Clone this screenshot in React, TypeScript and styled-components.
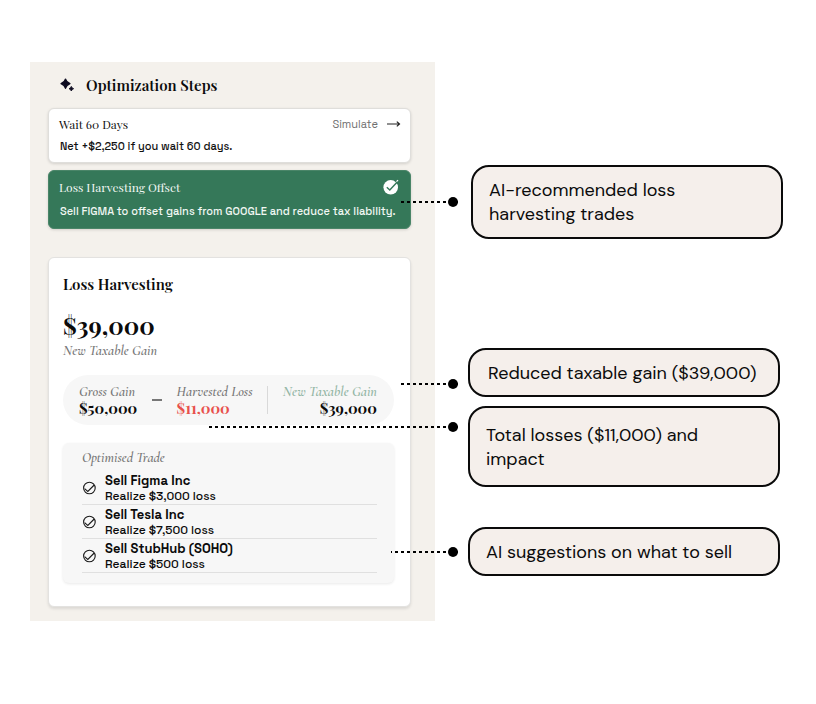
import React from "react";
import styled, { createGlobalStyle } from "styled-components";

const serif = '"Playfair Display", "Liberation Serif", serif';
const italicSerif = '"Cormorant Garamond", Cormorant, "Liberation Serif", serif';
const sans = '"Space Grotesk", Inter, sans-serif';

const GlobalStyle = createGlobalStyle`
  *, *::before, *::after { box-sizing: border-box; }
  body { margin: 0; background: #fff; color: #0b0b0b; }
  h1, h2, h3, p, ul, dl, dd { margin: 0; padding: 0; }
`;

const Page = styled.div`
  display: grid;
  grid-template-columns: 405fr 315fr;
  gap: 33px;
  align-items: start;
  padding: 62px 33px 62px 30px;
  font-family: ${sans};
`;

const Panel = styled.main`
  padding: 12px 24px 14px 18px;
  background: #f4f1ec;
`;

const PanelHeader = styled.header`
  display: flex;
  align-items: center;
  gap: 11px;
  height: 22px;
  margin-bottom: 12px;
  padding-left: 11px;
`;

const PanelTitle = styled.h1`
  font: 600 15px/22px ${serif};
  white-space: nowrap;
`;

const StepCard = styled.section<{ $active?: boolean }>`
  margin-bottom: 7px;
  padding: ${(p) => (p.$active ? "6px 11px 7px 10px" : "5px 9px 6px 10px")};
  border: 1px solid ${(p) => (p.$active ? "#4a8568" : "#dfdedb")};
  border-radius: 6px;
  background: ${(p) => (p.$active ? "#357859" : "#fff")};
  color: ${(p) => (p.$active ? "#f1f7f3" : "#111")};
  box-shadow: 0 1px 3px rgba(0, 0, 0, 0.14);
`;

const StepTop = styled.div`
  display: flex;
  align-items: center;
  justify-content: space-between;
  height: 20px;
`;

const StepTitle = styled.h2`
  font: 400 12px/20px ${serif};
  white-space: nowrap;
`;

const StepText = styled.p<{ $offset?: boolean }>`
  margin-top: ${(p) => (p.$offset ? "4px" : "2px")};
  padding-left: 1px;
  font-size: 11px;
  font-weight: 500;
  line-height: 20px;
  white-space: nowrap;
`;

const SimulateButton = styled.button`
  display: flex;
  align-items: center;
  gap: 8px;
  padding: 0;
  border: 0;
  background: none;
  color: #6f6f6f;
  font: 400 11px/16px ${sans};
  cursor: pointer;
`;

const HarvestCard = styled.section`
  margin-top: 28px;
  padding: 14px 16px 23px 14px;
  border: 1px solid #e3e2e0;
  border-radius: 6px;
  background: #fff;
  box-shadow: 0 2px 3px rgba(0, 0, 0, 0.1);
`;

const HarvestTitle = styled.h2`
  font: 600 15px/24px ${serif};
`;

const Total = styled.p`
  margin-top: 12px;
  font: 700 24px/34px ${serif};
`;

const Caption = styled.p`
  font: italic 600 14px/18px ${italicSerif};
  color: #777;
`;

const Summary = styled.dl`
  display: flex;
  align-items: center;
  justify-content: space-between;
  height: 50px;
  margin-top: 15px;
  padding: 0 17px 0 16px;
  border-radius: 25px;
  background: #f7f7f7;
`;

const Figure = styled.div<{ $end?: boolean }>`
  text-align: ${(p) => (p.$end ? "right" : "left")};
  white-space: nowrap;
`;

const FigureLabel = styled.dt<{ $color?: string }>`
  font: italic 600 14px/17px ${italicSerif};
  color: ${(p) => p.$color ?? "#777"};
`;

const FigureValue = styled.dd<{ $color?: string }>`
  font: 700 15px/17px ${serif};
  color: ${(p) => p.$color ?? "#0b0b0b"};
`;

const Minus = styled.span`
  width: 10px;
  height: 2px;
  background: #777;
`;

const Divider = styled.span`
  width: 1px;
  height: 28px;
  background: #d9d9d9;
`;

const Trades = styled.section`
  margin-top: 18px;
  padding: 6px 17px 10px 19px;
  border-radius: 6px;
  background: #f7f7f7;
  box-shadow: 0 1px 3px rgba(0, 0, 0, 0.09);
`;

const TradesTitle = styled.h3`
  margin-bottom: 4px;
  font: italic 600 14px/18px ${italicSerif};
  color: #777;
`;

const TradeList = styled.ul`
  list-style: none;
`;

const Trade = styled.li`
  display: flex;
  align-items: center;
  gap: 9px;
  height: 34px;
  border-bottom: 1px solid #e0e0e0;
`;

const TradeName = styled.p`
  font-size: 13px;
  font-weight: 600;
  line-height: 17px;
`;

const TradeNote = styled.p`
  font-size: 12px;
  font-weight: 500;
  line-height: 15px;
`;

const Notes = styled.aside`
  display: flex;
  flex-direction: column;
  align-items: flex-start;
  padding-top: 103px;
`;

const Note = styled.div<{ $gap?: number; $height: number; $inset: number; $end?: boolean }>`
  position: relative;
  display: flex;
  align-items: center;
  align-self: ${(p) => (p.$end ? "flex-end" : "flex-start")};
  width: calc(100% - 3px);
  min-height: ${(p) => p.$height}px;
  margin-top: ${(p) => p.$gap ?? 0}px;
  padding: 0 8px 0 ${(p) => p.$inset}px;
  border: 2px solid #0a0a0a;
  border-radius: 18px;
  background: #f5efeb;
  font: 400 18px/24px "DM Sans", Inter, sans-serif;
`;

const Connector = styled.span<{ $length: number; $top: number; $gap: number }>`
  position: absolute;
  top: ${(p) => p.$top}px;
  right: calc(100% + ${(p) => p.$gap}px);
  width: ${(p) => p.$length}px;
  height: 2px;
  background: repeating-linear-gradient(to left, #000 0 3px, transparent 3px 6px);

  &::after {
    content: "";
    position: absolute;
    top: -4px;
    right: 0;
    width: 10px;
    height: 10px;
    border-radius: 50%;
    background: #000;
  }
`;

const Sparkles = () => (
  <svg width="16" height="16" viewBox="0 0 16 16" fill="#0d0b20" aria-hidden="true">
    <path d="M6.5 2 Q7.4 5.4 11 6.6 Q7.4 7.8 6.5 11.4 Q5.6 7.8 2 6.6 Q5.6 5.4 6.5 2Z" stroke="#0d0b20" strokeWidth="1.2" strokeLinejoin="round" />
    <path d="M12.3 9.4 Q12.8 11.2 14.6 11.7 Q12.8 12.2 12.3 14 Q11.8 12.2 10 11.7 Q11.8 11.2 12.3 9.4Z" stroke="#0d0b20" strokeWidth=".9" />
  </svg>
);

const Arrow = () => (
  <svg width="15" height="8" viewBox="0 0 15 8" fill="none" stroke="#222" strokeWidth="1.2" aria-hidden="true">
    <path d="M1 4H13.5M10.8 1.6L13.5 4L10.8 6.4" />
  </svg>
);

const DoneIcon = () => (
  <svg width="16" height="16" viewBox="0 0 16 16" aria-hidden="true">
    <circle cx="7.7" cy="8.3" r="7.3" fill="#fff" />
    <path d="M3.8 8.2L6.8 11L14 3.2" fill="none" stroke="#357859" strokeWidth="1.4" />
    <path d="M13.5 2.7L15 1.2" stroke="#fff" strokeWidth="1.2" />
  </svg>
);

const TradeIcon = () => (
  <svg width="14" height="14" viewBox="0 0 14 14" fill="none" stroke="#1a1a1a" strokeWidth="1.1" aria-hidden="true">
    <circle cx="7.4" cy="7" r="5.8" />
    <path d="M2.6 7.6L5.8 10.4L12.2 4" />
  </svg>
);

const trades = [
  { name: "Sell Figma Inc", note: "Realize $3,000 loss" },
  { name: "Sell Tesla Inc", note: "Realize $7,500 loss" },
  { name: "Sell StubHub (SOHO)", note: "Realize $500 loss" },
];

export default function App() {
  return (
    <>
      <GlobalStyle />
      <Page>
        <Panel>
          <PanelHeader>
            <Sparkles />
            <PanelTitle>Optimization Steps</PanelTitle>
          </PanelHeader>

          <StepCard>
            <StepTop>
              <StepTitle>Wait 60 Days</StepTitle>
              <SimulateButton type="button">
                Simulate
                <Arrow />
              </SimulateButton>
            </StepTop>
            <StepText>Net +$2,250 if you wait 60 days.</StepText>
          </StepCard>

          <StepCard $active>
            <StepTop>
              <StepTitle>Loss Harvesting Offset</StepTitle>
              <DoneIcon />
            </StepTop>
            <StepText $offset>Sell FIGMA to offset gains from GOOGLE and reduce tax liability.</StepText>
          </StepCard>

          <HarvestCard>
            <HarvestTitle>Loss Harvesting</HarvestTitle>
            <Total>$39,000</Total>
            <Caption>New Taxable Gain</Caption>
            <Summary>
              <Figure>
                <FigureLabel>Gross Gain</FigureLabel>
                <FigureValue>$50,000</FigureValue>
              </Figure>
              <Minus />
              <Figure>
                <FigureLabel>Harvested Loss</FigureLabel>
                <FigureValue $color="#e8504c">$11,000</FigureValue>
              </Figure>
              <Divider />
              <Figure $end>
                <FigureLabel $color="#92b5a4">New Taxable Gain</FigureLabel>
                <FigureValue>$39,000</FigureValue>
              </Figure>
            </Summary>
            <Trades>
              <TradesTitle>Optimised Trade</TradesTitle>
              <TradeList>
                {trades.map((t) => (
                  <Trade key={t.name}>
                    <TradeIcon />
                    <div>
                      <TradeName>{t.name}</TradeName>
                      <TradeNote>{t.note}</TradeNote>
                    </div>
                  </Trade>
                ))}
              </TradeList>
            </Trades>
          </HarvestCard>
        </Panel>

        <Notes>
          <Note $height={74} $inset={16} $end>
            <Connector $length={58} $top={34} $gap={15} />
            <span>AI-recommended loss<br />harvesting trades</span>
          </Note>
          <Note $gap={109} $height={49} $inset={18}>
            <Connector $length={58} $top={33} $gap={12} />
            Reduced taxable gain ($39,000)
          </Note>
          <Note $gap={9} $height={81} $inset={16}>
            <Connector $length={251} $top={18} $gap={12} />
            <span>Total losses ($11,000) and<br />impact</span>
          </Note>
          <Note $gap={40} $height={49} $inset={16}>
            <Connector $length={67} $top={22} $gap={12} />
            AI suggestions on what to sell
          </Note>
        </Notes>
      </Page>
    </>
  );
}
